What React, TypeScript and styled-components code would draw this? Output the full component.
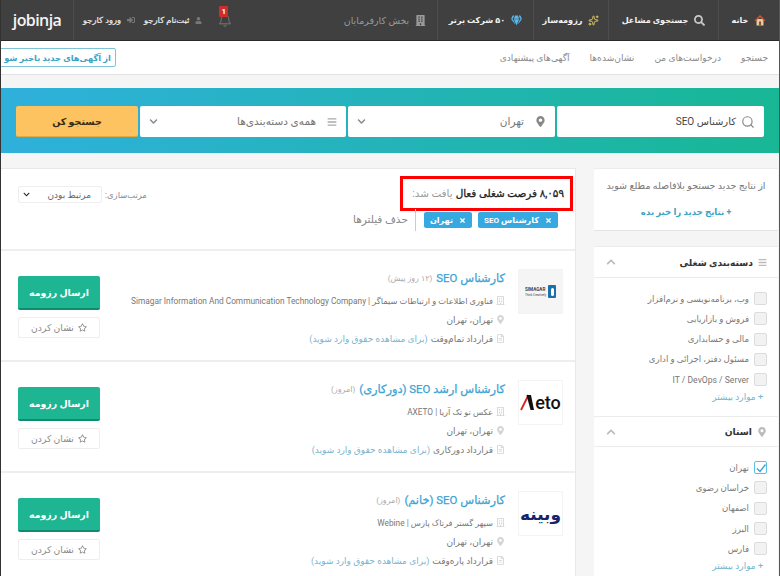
import styled, { createGlobalStyle } from "styled-components";
import {
  FaBars,
  FaBuilding,
  FaChevronDown,
  FaChevronUp,
  FaGem,
  FaMapMarkerAlt,
  FaRegBell,
  FaRegBuilding,
  FaRegFileAlt,
  FaRegStar,
  FaSearch,
  FaSignInAlt,
  FaTimes,
  FaUser,
} from "react-icons/fa";
import { FiSearch } from "react-icons/fi";
import { Sparkles } from "lucide-react";

const GlobalStyle = createGlobalStyle`
  html, body {
    margin: 0;
    padding: 0;
    height: 576px;
    overflow: hidden;
    background: #f5f5f5;
  }
  * {
    box-sizing: border-box;
  }
  body {
    font-family: "Roboto", "DejaVu Sans", sans-serif;
    font-size: 10px;
    color: #555;
  }
`;

const Page = styled.div`
  direction: rtl;
  width: 780px;
  height: 576px;
  overflow: hidden;
  border-left: 1px solid #333;
  border-right: 1px solid #555;
`;

const TopBar = styled.header`
  height: 41px;
  background: #404040;
  border-bottom: 1px solid #2a2a2a;
  display: flex;
  align-items: stretch;
`;
const NavItem = styled.a<{ $width: number; $muted?: boolean }>`
  width: ${(p) => p.$width}px;
  display: flex;
  align-items: center;
  justify-content: center;
  gap: 6px;
  color: ${(p) => (p.$muted ? "#9a9a9a" : "#f2f2f2")};
  font-size: ${(p) => (p.$muted ? 9.5 : 8.1)}px;
  font-weight: ${(p) => (p.$muted ? 400 : 700)};
  white-space: nowrap;
  border-left: ${(p) => (p.$muted ? "none" : "1px solid #4d4d4d")};
  svg {
    flex: none;
  }
`;
const TopSpacer = styled.div`
  flex: 1;
`;
const Account = styled.a`
  display: flex;
  align-items: center;
  gap: 6px;
  color: #eee;
  font-size: 8.4px;
  -webkit-text-stroke: 0.2px #eee;
  white-space: nowrap;
  margin-left: 9px;
`;
const BellWrap = styled.div`
  position: relative;
  width: 13px;
  height: 15px;
  margin-left: 17px;
  align-self: center;
  color: #666;
`;
const BellBadge = styled.span`
  position: absolute;
  top: -7px;
  right: 4px;
  width: 9px;
  height: 11px;
  background: #d02c2c;
  color: #fff;
  font-size: 8px;
  font-weight: 700;
  line-height: 11px;
  text-align: center;
  border-radius: 1px;
`;
const Logo = styled.div`
  width: 73px;
  border-right: 1px solid #4d4d4d;
  display: flex;
  align-items: center;
  justify-content: center;
  direction: ltr;
  color: #f4f4f4;
  font-family: "Open Sans", "DejaVu Sans", sans-serif;
  font-size: 16px;
  font-weight: 600;
  letter-spacing: -0.6px;
`;

const SubNav = styled.nav`
  height: 34px;
  background: #fff;
  border-bottom: 1px solid #e2e2e2;
  display: flex;
  align-items: center;
  padding: 0 11px 0 0;
`;
const SubLink = styled.a`
  color: #8a8a8a;
  font-size: 9.1px;
  margin-left: 20px;
  white-space: nowrap;
`;
const AlertButton = styled.a`
  margin-right: auto;
  margin-left: -2px;
  width: 117px;
  height: 19px;
  border: 1px solid #7fc4d6;
  border-radius: 2px;
  display: flex;
  align-items: center;
  justify-content: center;
  color: #3ba3c4;
  font-size: 8.3px;
  font-weight: 700;
  white-space: nowrap;
`;

const SearchBand = styled.section`
  margin-top: 13px;
  height: 65px;
  background: linear-gradient(90deg, #2fb0dc 0%, #18b795 100%);
  padding: 18px 15px 0 15px;
  display: flex;
  gap: 2px;
`;
const Field = styled.div<{ $width: number; $filled?: boolean }>`
  width: ${(p) => p.$width}px;
  height: 31px;
  background: #fff;
  border-radius: 2px;
  display: flex;
  align-items: center;
  gap: ${(p) => (p.$filled ? 5 : 11)}px;
  padding: 0 9px;
  color: ${(p) => (p.$filled ? "#444" : "#777")};
  font-size: ${(p) => (p.$filled ? 10 : 10.5)}px;
`;
const FieldEnd = styled.span`
  margin-right: auto;
  color: #888;
  display: flex;
`;
const SearchButton = styled.button`
  width: 122px;
  height: 31px;
  border: none;
  border-bottom: 1px solid #e5a93e;
  border-radius: 2px;
  background: #fcc360;
  color: #3a2c10;
  font-family: inherit;
  font-size: 9.5px;
  font-weight: 700;
`;

const Columns = styled.div`
  margin-top: 15px;
  display: flex;
  align-items: flex-start;
  padding-right: 1px;
  gap: 18px;
`;
const Sidebar = styled.aside`
  width: 184px;
  flex: none;
  display: flex;
  flex-direction: column;
  gap: 15px;
`;
const NoticeCard = styled.div`
  height: 63px;
  background: #fff;
  border-bottom: 1px solid #e4e4e4;
  border-top: 1px solid #ececec;
  text-align: center;
  padding-top: 11px;
  font-size: 9.5px;
  color: #777;
`;
const NoticeLink = styled.div`
  margin-top: 16px;
  color: #3ba3c4;
  font-size: 8.6px;
  font-weight: 700;
`;
const FilterCard = styled.div`
  background: #fff;
  border-top: 1px solid #ececec;
`;
const FilterHead = styled.div`
  height: 31px;
  display: flex;
  align-items: center;
  gap: 5px;
  padding: 0 11px 0 12px;
  border-bottom: 1px solid #ececec;
  color: #333;
  font-size: 9.2px;
  font-weight: 700;
  svg:first-child {
    color: #bbb;
  }
`;
const ProvinceHead = styled(FilterHead)`
  border-top: 1px solid #ececec;
`;
const Collapse = styled.span`
  margin-right: auto;
  color: #bbb;
  display: flex;
`;
const FilterList = styled.ul`
  list-style: none;
  margin: 0;
  padding: 14px 11px 6px 0;
  display: flex;
  flex-direction: column;
  gap: 7.3px;
`;
const FilterRow = styled.li`
  height: 13px;
  display: flex;
  align-items: center;
  gap: 5px;
  color: #777;
  font-size: 8.6px;
  white-space: nowrap;
`;
const Check = styled.span<{ $on?: boolean }>`
  width: 13px;
  height: 13px;
  flex: none;
  border-radius: 2px;
  border: 1px solid ${(p) => (p.$on ? "#5fc0e0" : "#dcdcdc")};
  background: ${(p) => (p.$on ? "#fff" : "#f2f2f2")};
  display: flex;
  align-items: center;
  justify-content: center;
`;
const MoreLink = styled.div`
  padding: 0 15px 14px 0;
  color: #6fb6cf;
  font-size: 9px;
`;

const Main = styled.main`
  flex: 1;
  min-width: 0;
  background: #fff;
  border-top: 1px solid #e8e8e8;
  border-right: 1px solid #e8e8e8;
`;
const ResultsHead = styled.div`
  height: 82px;
  border-bottom: 2px solid #eee;
  position: relative;
  padding: 7px 17px 0 0;
`;
const Count = styled.div`
  height: 35px;
  width: 173px;
  margin-right: -15px;
  border: 3px solid #f00;
  display: flex;
  align-items: center;
  padding-right: 6px;
  gap: 3px;
  font-size: 10.4px;
  color: #999;
  white-space: nowrap;
  b {
    color: #222;
    font-weight: 400;
    -webkit-text-stroke: 0.3px #222;
  }
`;
const Tags = styled.div`
  margin-top: 1px;
  height: 16px;
  display: flex;
  align-items: center;
  gap: 6px;
`;
const Tag = styled.span`
  height: 16px;
  padding: 0 6px;
  background: #36a9e1;
  border-radius: 2px;
  color: #fff;
  font-size: 8.1px;
  font-weight: 700;
  display: flex;
  align-items: center;
  gap: 6px;
  white-space: nowrap;
`;
const ClearFilters = styled.span`
  margin-right: 2px;
  padding-right: 7px;
  border-right: 1px solid #ccc;
  color: #888;
  font-size: 10.5px;
  line-height: 22px;
`;
const SortBox = styled.div`
  position: absolute;
  top: 17px;
  left: 17px;
  display: flex;
  align-items: center;
  gap: 3px;
  font-size: 8.4px;
  color: #888;
`;
const SortSelect = styled.div`
  width: 84px;
  height: 17px;
  border: 1px solid #eee;
  border-radius: 2px;
  display: flex;
  align-items: center;
  padding: 0 10px;
  color: #666;
  font-size: 9px;
  svg {
    margin-right: auto;
    margin-left: -6px;
    color: #222;
  }
`;

const JobCard = styled.article`
  height: 111px;
  border-bottom: 2px solid #eee;
  display: flex;
  padding: 18px 12px 0 17px;
  gap: 13px;
`;
const LogoBox = styled.div<{ $bg?: string }>`
  width: 45px;
  height: 45px;
  flex: none;
  background: ${(p) => p.$bg ?? "#fff"};
  border: 1px solid #f4f4f4;
  display: flex;
  align-items: center;
  justify-content: center;
  gap: 2px;
  direction: ltr;
`;
const SimagarName = styled.span`
  display: flex;
  flex-direction: column;
  font-size: 4.6px;
  font-weight: 700;
  line-height: 6px;
  color: #445;
  small {
    font-size: 3px;
    font-weight: 400;
    line-height: 4px;
  }
`;
const SimagarMark = styled.span`
  width: 8px;
  height: 13px;
  background: #1c6fa8;
  border-radius: 1px;
  display: flex;
  align-items: center;
  justify-content: center;
  &::after {
    content: "";
    width: 3px;
    height: 8px;
    background: #fff;
    border-radius: 2px;
  }
`;
const AxetoLogo = styled.span`
  display: flex;
  align-items: center;
  gap: 0;
  font-family: "Roboto", sans-serif;
  font-size: 18px;
  font-weight: 500;
  color: #111;
`;
const WebineLogo = styled.span`
  font-family: "DejaVu Sans", sans-serif;
  font-size: 17px;
  font-weight: 700;
  color: #16246b;
`;
const JobBody = styled.div`
  flex: 1;
  min-width: 0;
  padding-top: 1px;
`;
const JobTitle = styled.div`
  height: 16px;
  display: flex;
  align-items: center;
  gap: 4px;
  color: #3ba3d4;
  font-size: 11.4px;
  -webkit-text-stroke: 0.25px #3ba3d4;
  white-space: nowrap;
  small {
    color: #aaa;
    font-size: 8px;
    -webkit-text-stroke: 0;
  }
`;
const JobMeta = styled.div`
  margin-top: 4px;
  height: 15px;
  display: flex;
  align-items: center;
  gap: 3px;
  color: #777;
  font-size: 9px;
  white-space: nowrap;
  svg {
    color: #d4d4d4;
    flex: none;
  }
  a {
    color: #7bb5cf;
  }
`;
const CompanyMeta = styled(JobMeta)`
  margin-top: 7px;
  font-size: 8.3px;
`;
const JobActions = styled.div`
  width: 82px;
  flex: none;
  padding-top: 7px;
  display: flex;
  flex-direction: column;
  gap: 7px;
`;
const ApplyButton = styled.button`
  height: 34px;
  border: none;
  border-bottom: 2px solid #128a6e;
  border-radius: 2px;
  background: #1eb593;
  color: #fff;
  font-family: inherit;
  font-size: 9.4px;
  font-weight: 700;
`;
const SaveButton = styled.button`
  height: 21px;
  border: 1px solid #eee;
  border-radius: 2px;
  background: #fff;
  color: #888;
  font-family: inherit;
  font-size: 9.2px;
  display: flex;
  align-items: center;
  justify-content: center;
  gap: 4px;
`;

type Job = {
  title: string;
  age: string;
  company: string;
  contract: string;
  logo: React.ReactNode;
  logoBg?: string;
};

const HomeIcon = () => (
  <svg width="12" height="12" viewBox="0 0 12 12">
    <rect x="2.5" y="5" width="7" height="6.5" fill="#e8c79a" />
    <rect x="5" y="7.5" width="2" height="4" fill="#7a5a3a" />
    <path d="M0.5 6.5 L6 1 L11.5 6.5 L10 7 L6 3 L2 7 Z" fill="#d9562f" />
  </svg>
);

const AxetoMark = () => (
  <svg width="15" height="17" viewBox="0 0 15 17">
    <path d="M8.5 1 L1 16" stroke="#d22" strokeWidth="1.8" fill="none" />
    <path d="M6.5 1 L11 1 L14 16 L10.5 16 Z" fill="#111" />
  </svg>
);

const jobs: Job[] = [
  {
    title: "کارشناس SEO",
    age: "(۱۲ روز پیش)",
    company:
      "فناوری اطلاعات و ارتباطات سیماگر | Simagar Information And Communication Technology Company",
    contract: "قرارداد تمام‌وقت",
    logoBg: "#f5f5f5",
    logo: (
      <>
        <SimagarName>
          SIMAGAR
          <small>Think Creatively</small>
        </SimagarName>
        <SimagarMark />
      </>
    ),
  },
  {
    title: "کارشناس ارشد SEO (دورکاری)",
    age: "(امروز)",
    company: "عکس تو تک آریا | AXETO",
    contract: "قرارداد دورکاری",
    logo: (
      <AxetoLogo>
        <AxetoMark />
        eto
      </AxetoLogo>
    ),
  },
  {
    title: "کارشناس SEO (خانم)",
    age: "(امروز)",
    company: "سپهر گستر فرتاک پارس | Webine",
    contract: "قرارداد پاره‌وقت",
    logo: <WebineLogo>وبینه</WebineLogo>,
  },
];

const categories = [
  "وب، برنامه‌نویسی و نرم‌افزار",
  "فروش و بازاریابی",
  "مالی و حسابداری",
  "مسئول دفتر، اجرائی و اداری",
  "IT / DevOps / Server",
];
const provinces = ["تهران", "خراسان رضوی", "اصفهان", "البرز", "فارس"];

export default function App() {
  return (
    <Page>
      <GlobalStyle />
      <TopBar>
        <NavItem $width={61}>
          <HomeIcon />
          خانه
        </NavItem>
        <NavItem $width={110}>
          <FaSearch size={11} color="#c9c9c9" />
          جستجوی مشاغل
        </NavItem>
        <NavItem $width={75}>
          <Sparkles size={11} color="#e6cf6a" />
          رزومه‌ساز
        </NavItem>
        <NavItem $width={96}>
          <FaGem size={11} color="#5bb8e8" />
          ۵۰ شرکت برتر
        </NavItem>
        <NavItem $width={104} $muted>
          <FaBuilding size={11} />
          بخش کارفرمایان
        </NavItem>
        <TopSpacer />
        <BellWrap>
          <FaRegBell size={14} />
          <BellBadge>1</BellBadge>
        </BellWrap>
        <Account>
          <FaUser size={7} color="#777" />
          ثبت‌نام کارجو
        </Account>
        <Account>
          <FaSignInAlt size={8} color="#777" />
          ورود کارجو
        </Account>
        <Logo>jobinja</Logo>
      </TopBar>

      <SubNav>
        <SubLink>جستجو</SubLink>
        <SubLink>درخواست‌های من</SubLink>
        <SubLink>نشان‌شده‌ها</SubLink>
        <SubLink>آگهی‌های پیشنهادی</SubLink>
        <AlertButton>از آگهی‌های جدید باخبر شو</AlertButton>
      </SubNav>

      <SearchBand>
        <Field $width={207} $filled>
          <FiSearch size={14} color="#888" />
          کارشناس SEO
        </Field>
        <Field $width={207}>
          <FaMapMarkerAlt size={11} color="#888" />
          تهران
          <FieldEnd>
            <FaChevronDown size={9} />
          </FieldEnd>
        </Field>
        <Field $width={206}>
          <FaBars size={10} color="#aaa" />
          همه‌ی دسته‌بندی‌ها
          <FieldEnd>
            <FaChevronDown size={9} />
          </FieldEnd>
        </Field>
        <SearchButton>جستجو کن</SearchButton>
      </SearchBand>

      <Columns>
        <Sidebar>
          <NoticeCard>
            از نتایج جدید جستجو بلافاصله مطلع شوید
            <NoticeLink>+ نتایج جدید را خبر بده</NoticeLink>
          </NoticeCard>
          <FilterCard>
            <FilterHead>
              <FaBars size={9} />
              دسته‌بندی شغلی
              <Collapse>
                <FaChevronUp size={10} />
              </Collapse>
            </FilterHead>
            <FilterList>
              {categories.map((c) => (
                <FilterRow key={c}>
                  <Check />
                  {c}
                </FilterRow>
              ))}
            </FilterList>
            <MoreLink>+ موارد بیشتر</MoreLink>
            <ProvinceHead>
              <FaMapMarkerAlt size={10} />
              استان
              <Collapse>
                <FaChevronUp size={10} />
              </Collapse>
            </ProvinceHead>
            <FilterList>
              {provinces.map((p, i) => (
                <FilterRow key={p}>
                  <Check $on={i === 0}>
                    {i === 0 && (
                      <svg width="10" height="10" viewBox="0 0 10 10">
                        <path
                          d="M1 5.5 L4 8.5 L9.5 1.5"
                          fill="none"
                          stroke="#3ba3d4"
                          strokeWidth="1.4"
                        />
                      </svg>
                    )}
                  </Check>
                  {p}
                </FilterRow>
              ))}
            </FilterList>
            <MoreLink>+ موارد بیشتر</MoreLink>
          </FilterCard>
        </Sidebar>

        <Main>
          <ResultsHead>
            <Count>
              <b>۸,۰۵۹ فرصت شغلی فعال</b> یافت شد:
            </Count>
            <Tags>
              <Tag>
                <FaTimes size={7} />
                کارشناس SEO
              </Tag>
              <Tag>
                <FaTimes size={7} />
                تهران
              </Tag>
              <ClearFilters>حذف فیلترها</ClearFilters>
            </Tags>
            <SortBox>
              مرتب‌سازی:
              <SortSelect>
                مرتبط بودن
                <FaChevronDown size={7} />
              </SortSelect>
            </SortBox>
          </ResultsHead>

          {jobs.map((job) => (
            <JobCard key={job.title}>
              <LogoBox $bg={job.logoBg}>{job.logo}</LogoBox>
              <JobBody>
                <JobTitle>
                  {job.title} <small>{job.age}</small>
                </JobTitle>
                <CompanyMeta>
                  <FaRegBuilding size={9} />
                  {job.company}
                </CompanyMeta>
                <JobMeta>
                  <FaMapMarkerAlt size={9} />
                  تهران، تهران
                </JobMeta>
                <JobMeta>
                  <FaRegFileAlt size={9} />
                  {job.contract} <a>(برای مشاهده حقوق وارد شوید)</a>
                </JobMeta>
              </JobBody>
              <JobActions>
                <ApplyButton>ارسال رزومه</ApplyButton>
                <SaveButton>
                  <FaRegStar size={9} />
                  نشان کردن
                </SaveButton>
              </JobActions>
            </JobCard>
          ))}
        </Main>
      </Columns>
    </Page>
  );
}
